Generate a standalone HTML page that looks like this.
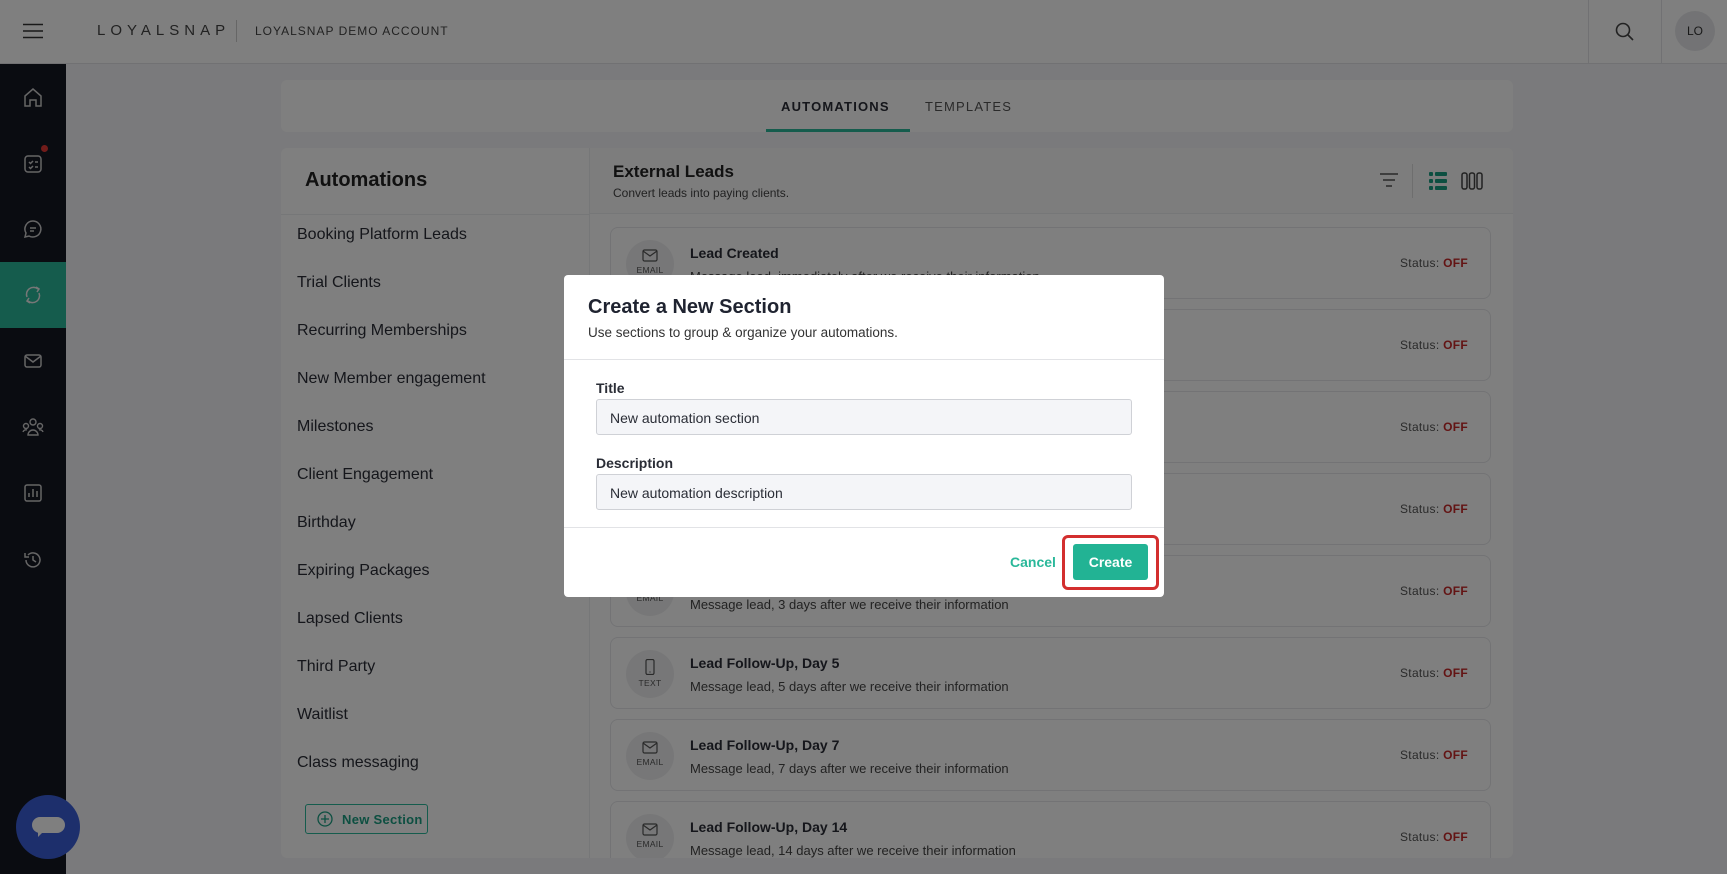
<!DOCTYPE html>
<html><head><meta charset="utf-8"><style>
*{box-sizing:border-box;margin:0;padding:0}
body{width:1727px;height:874px;overflow:hidden;font-family:"Liberation Sans",sans-serif;background:#f4f5f8;position:relative;color:#1f2330}
.abs{position:absolute}
#hdr{left:0;top:0;width:1727px;height:64px;background:#fff;border-bottom:1px solid #e2e3e6}
#side{left:0;top:64px;width:66px;height:810px;background:#151823}
.si{position:absolute;left:0;width:66px;height:66px;display:flex;align-items:center;justify-content:center}
.card{background:#fff;border-radius:6px}
.li{position:absolute;left:297px;font-size:16px;color:#2a2d36}
.ac{position:absolute;left:610px;width:881px;height:72px;border:1px solid #e6e7ea;border-radius:8px;background:#fff}
.ac .ic{position:absolute;left:15px;top:12px;width:48px;height:48px;border-radius:50%;background:#eeeff1;text-align:center;font-size:8.5px;color:#555;padding-top:9px;letter-spacing:.3px}
.ac .ic svg{display:block;margin:0 auto 3px}
.ac .t{position:absolute;left:79px;top:17px;font-size:14px;font-weight:bold;color:#2a2d36}
.ac .d{position:absolute;left:79px;top:41px;font-size:13px;color:#444}
.ac .s{position:absolute;right:22px;top:28px;font-size:12px;color:#555;letter-spacing:.3px}
.ac .s b{color:#c62828}
#ov{left:0;top:0;width:1727px;height:874px;background:rgba(0,0,0,.5)}
#modal{left:564px;top:275px;width:600px;height:322px;background:#fff;border-radius:4px}
.inp{position:absolute;left:32px;width:536px;height:36px;background:#f4f5f8;border:1px solid #cfd1d6;border-radius:3px;font-size:14px;padding:10px 13px;color:#2a2d36}
.lbl{position:absolute;left:32px;font-size:14px;font-weight:bold;color:#2a2d36}
</style></head><body>
<div id="hdr" class="abs">
 <svg class="abs" style="left:23px;top:23px" width="20" height="16"><path d="M0 1.5h20M0 8h20M0 14.5h20" stroke="#333" stroke-width="1.6"/></svg>
 <div class="abs" style="left:97px;top:22px;font-size:15px;letter-spacing:5px;color:#444">LOYALSNAP</div>
 <div class="abs" style="left:236px;top:20px;width:1px;height:22px;background:#ccc"></div>
 <div class="abs" style="left:255px;top:24px;font-size:12px;letter-spacing:1px;color:#444">LOYALSNAP DEMO ACCOUNT</div>
 <div class="abs" style="left:1588px;top:0;width:1px;height:64px;background:#e2e3e6"></div>
 <div class="abs" style="left:1661px;top:0;width:1px;height:64px;background:#e2e3e6"></div>
 <svg class="abs" style="left:1615px;top:22px" width="20" height="20"><circle cx="8" cy="8" r="6.5" fill="none" stroke="#444" stroke-width="1.6"/><path d="M13 13l5 5" stroke="#444" stroke-width="1.6"/></svg>
 <div class="abs" style="left:1675px;top:11px;width:40px;height:40px;border-radius:50%;background:#e6e7ea;font-size:12px;color:#333;text-align:center;line-height:40px">LO</div>
</div>
<div id="side" class="abs">
 <div class="si" style="top:0"><svg width="22" height="22" fill="none" stroke="#ccc" stroke-width="1.5"><path d="M3 10L11 3l8 7v10h-5v-6H8v6H3z"/></svg></div>
 <div class="si" style="top:66px"><svg width="22" height="22" fill="none" stroke="#ccc" stroke-width="1.5"><rect x="3" y="4" width="16" height="16" rx="3"/><path d="M7 10l1.5 1.5L11 9M7 15l1.5 1.5L11 14M13 10h3M13 15h3"/></svg><div class="abs" style="left:41px;top:15px;width:7px;height:7px;border-radius:50%;background:#e53935"></div></div>
 <div class="si" style="top:132px"><svg width="22" height="22" fill="none" stroke="#ccc" stroke-width="1.5"><path d="M11 3a8 8 0 1 1-4 15l-4 1 1-4A8 8 0 0 1 11 3z"/><path d="M8 10h6M8 13h4"/></svg></div>
 <div class="si" style="top:198px;background:#2ab89a"><svg width="22" height="24" fill="none" stroke="#eee" stroke-width="1.5"><path d="M5 14a7 7 0 0 1 11-8M17 10a7 7 0 0 1-11 8M14 4l3 2-2 3M8 20l-3-2 2-3"/></svg></div>
 <div class="si" style="top:264px"><svg width="22" height="22" fill="none" stroke="#ccc" stroke-width="1.5"><rect x="3" y="5" width="16" height="12" rx="2"/><path d="M3 6l8 6 8-6"/></svg></div>
 <div class="si" style="top:330px"><svg width="24" height="22" fill="none" stroke="#ccc" stroke-width="1.4"><circle cx="12" cy="6" r="3"/><circle cx="5" cy="10" r="2.5"/><circle cx="19" cy="10" r="2.5"/><path d="M7 19a5 5 0 0 1 10 0zM2 16a3 3 0 0 1 4-2M22 16a3 3 0 0 0-4-2"/></svg></div>
 <div class="si" style="top:396px"><svg width="22" height="22" fill="none" stroke="#ccc" stroke-width="1.5"><rect x="3" y="3" width="16" height="16" rx="2"/><path d="M7 15v-4M11 15V7M15 15v-6"/></svg></div>
 <div class="si" style="top:463px"><svg width="22" height="22" fill="none" stroke="#ccc" stroke-width="1.5"><path d="M4 11a7 7 0 1 0 2-5M3 4v4h4M11 7v4l3 2"/></svg></div>
</div>
<!-- tabs -->
<div class="abs card" style="left:281px;top:80px;width:1232px;height:52px">
 <div class="abs" style="left:500px;top:19px;font-size:13px;font-weight:bold;letter-spacing:1.2px;color:#2a2d36">AUTOMATIONS</div>
 <div class="abs" style="left:485px;top:49px;width:144px;height:3px;background:#2ab89a"></div>
 <div class="abs" style="left:644px;top:19px;font-size:13px;letter-spacing:1.2px;color:#555">TEMPLATES</div>
</div>
<!-- main -->
<div class="abs card" style="left:281px;top:148px;width:1232px;height:710px;overflow:hidden">
 <div class="abs" style="left:0;top:0;width:309px;height:710px;border-right:1px solid #eceef1"></div>
 <div class="abs" style="left:309px;top:0;width:923px;height:66px;background:#fafafb;border-bottom:1px solid #eceef1"></div>
 <div class="abs" style="left:24px;top:21px;font-size:20px;font-weight:bold;color:#222">Automations</div>
 <div class="abs" style="left:0;top:66px;width:309px;height:1px;background:#eceef1"></div>
 <div class="abs" style="left:332px;top:14px;font-size:17px;font-weight:bold;color:#222">External Leads</div>
 <div class="abs" style="left:332px;top:38px;font-size:12px;color:#444">Convert leads into paying clients.</div>
 <svg class="abs" style="left:1098px;top:24px" width="20" height="16"><path d="M1 2h18M4 8h12M7 14h6" stroke="#555" stroke-width="1.5"/></svg>
 <div class="abs" style="left:1131px;top:16px;width:1px;height:34px;background:#ddd"></div>
 <svg class="abs" style="left:1148px;top:24px" width="18" height="18"><rect x="0" y="0" width="4" height="4" rx="1" fill="#1a9e82"/><rect x="6" y="0" width="12" height="4" rx="1" fill="#1a9e82"/><rect x="0" y="7" width="4" height="4" rx="1" fill="#1a9e82"/><rect x="6" y="7" width="12" height="4" rx="1" fill="#1a9e82"/><rect x="0" y="14" width="4" height="4" rx="1" fill="#1a9e82"/><rect x="6" y="14" width="12" height="4" rx="1" fill="#1a9e82"/></svg>
 <svg class="abs" style="left:1180px;top:24px" width="22" height="18" fill="none" stroke="#444" stroke-width="1.5"><rect x="1" y="1" width="5" height="16" rx="2"/><rect x="8.5" y="1" width="5" height="16" rx="2"/><rect x="16" y="1" width="5" height="16" rx="2"/></svg>
</div>
<div class="li" style="top:226px">Booking Platform Leads</div>
<div class="li" style="top:274px">Trial Clients</div>
<div class="li" style="top:322px">Recurring Memberships</div>
<div class="li" style="top:370px">New Member engagement</div>
<div class="li" style="top:418px">Milestones</div>
<div class="li" style="top:466px">Client Engagement</div>
<div class="li" style="top:514px">Birthday</div>
<div class="li" style="top:562px">Expiring Packages</div>
<div class="li" style="top:610px">Lapsed Clients</div>
<div class="li" style="top:658px">Third Party</div>
<div class="li" style="top:706px">Waitlist</div>
<div class="li" style="top:754px">Class messaging</div>
<div class="abs" style="left:305px;top:804px;width:123px;height:30px;border:1px solid #2ab89a;border-radius:3px;font-size:13px;font-weight:bold;color:#1a9e82;padding:7px 0 0 36px;letter-spacing:.3px">New Section<svg class="abs" style="left:11px;top:6px" width="16" height="16" fill="none" stroke="#1a9e82" stroke-width="1.3"><circle cx="8" cy="8" r="7"/><path d="M8 4v8M4 8h8"/></svg></div>
<!-- cards -->
<div class="ac" style="top:227px"><div class="ic"><svg width="16" height="13" fill="none" stroke="#555" stroke-width="1.2"><rect x="1" y="1" width="14" height="11" rx="1.5"/><path d="M1 2l7 5 7-5"/></svg>EMAIL</div><div class="t">Lead Created</div><div class="d">Message lead, immediately after we receive their information</div><div class="s">Status: <b>OFF</b></div></div>
<div class="ac" style="top:309px"><div class="ic"><svg width="16" height="13" fill="none" stroke="#555" stroke-width="1.2"><rect x="1" y="1" width="14" height="11" rx="1.5"/><path d="M1 2l7 5 7-5"/></svg>EMAIL</div><div class="t">Lead Follow-Up, Day 1</div><div class="d">Message lead, 1 day after we receive their information</div><div class="s">Status: <b>OFF</b></div></div>
<div class="ac" style="top:391px"><div class="ic"><svg width="16" height="13" fill="none" stroke="#555" stroke-width="1.2"><rect x="1" y="1" width="14" height="11" rx="1.5"/><path d="M1 2l7 5 7-5"/></svg>EMAIL</div><div class="t">Lead Follow-Up, Day 2</div><div class="d">Message lead, 2 days after we receive their information</div><div class="s">Status: <b>OFF</b></div></div>
<div class="ac" style="top:473px"><div class="ic"><svg width="16" height="13" fill="none" stroke="#555" stroke-width="1.2"><rect x="4" y="0.5" width="8" height="12" rx="1.5"/></svg>TEXT</div><div class="t">Lead Follow-Up, Day 2</div><div class="d">Message lead, 2 days after we receive their information</div><div class="s">Status: <b>OFF</b></div></div>
<div class="ac" style="top:555px"><div class="ic"><svg width="16" height="13" fill="none" stroke="#555" stroke-width="1.2"><rect x="1" y="1" width="14" height="11" rx="1.5"/><path d="M1 2l7 5 7-5"/></svg>EMAIL</div><div class="t">Lead Follow-Up, Day 3</div><div class="d">Message lead, 3 days after we receive their information</div><div class="s">Status: <b>OFF</b></div></div>
<div class="ac" style="top:637px"><div class="ic"><svg width="16" height="16" fill="none" stroke="#555" stroke-width="1.2"><rect x="4" y="0.5" width="8" height="15" rx="1.5"/><path d="M7.5 13h1"/></svg>TEXT</div><div class="t">Lead Follow-Up, Day 5</div><div class="d">Message lead, 5 days after we receive their information</div><div class="s">Status: <b>OFF</b></div></div>
<div class="ac" style="top:719px"><div class="ic"><svg width="16" height="13" fill="none" stroke="#555" stroke-width="1.2"><rect x="1" y="1" width="14" height="11" rx="1.5"/><path d="M1 2l7 5 7-5"/></svg>EMAIL</div><div class="t">Lead Follow-Up, Day 7</div><div class="d">Message lead, 7 days after we receive their information</div><div class="s">Status: <b>OFF</b></div></div>
<div class="ac" style="top:801px"><div class="ic"><svg width="16" height="13" fill="none" stroke="#555" stroke-width="1.2"><rect x="1" y="1" width="14" height="11" rx="1.5"/><path d="M1 2l7 5 7-5"/></svg>EMAIL</div><div class="t">Lead Follow-Up, Day 14</div><div class="d">Message lead, 14 days after we receive their information</div><div class="s">Status: <b>OFF</b></div></div>
<div class="abs" style="left:66px;top:858px;width:1661px;height:16px;background:#f4f5f8"></div>
<div class="abs" style="left:16px;top:795px;width:64px;height:64px;border-radius:50%;background:#3a5fd9"><div class="abs" style="left:16px;top:22px;width:33px;height:16px;border-radius:8px;background:#fff"></div><div class="abs" style="left:22px;top:36px;width:0;height:0;border-top:6px solid #fff;border-right:6px solid transparent"></div></div>
<div id="ov" class="abs"></div>
<div id="modal" class="abs">
 <div class="abs" style="left:24px;top:21px;font-size:20px;font-weight:bold;color:#1f2330">Create a New Section</div>
 <div class="abs" style="left:24px;top:50px;font-size:13.5px;color:#333">Use sections to group &amp; organize your automations.</div>
 <div class="abs" style="left:0;top:84px;width:600px;height:1px;background:#e2e3e6"></div>
 <div class="lbl" style="top:105px">Title</div>
 <div class="inp" style="top:124px">New automation section</div>
 <div class="lbl" style="top:180px">Description</div>
 <div class="inp" style="top:199px">New automation description</div>
 <div class="abs" style="left:0;top:252px;width:600px;height:1px;background:#e2e3e6"></div>
 <div class="abs" style="left:446px;top:279px;font-size:14px;font-weight:bold;color:#2ab89a">Cancel</div>
 <div class="abs" style="left:498px;top:260px;width:97px;height:55px;border:3px solid #d32f2f;border-radius:6px"></div>
 <div class="abs" style="left:509px;top:269px;width:75px;height:36px;background:#22b394;border-radius:3px;color:#fff;font-size:14px;font-weight:bold;text-align:center;line-height:36px">Create</div>
</div>
</body></html>
